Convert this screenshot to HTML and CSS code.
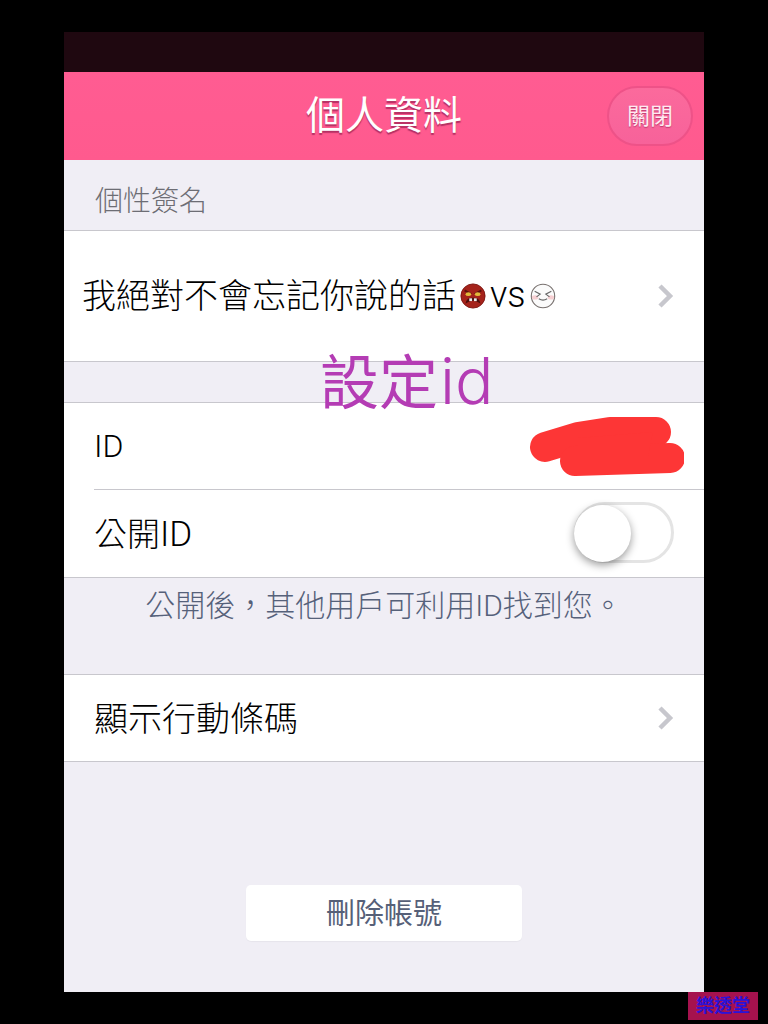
FILE: index.html
```html
<!DOCTYPE html>
<html lang="zh-Hant">
<head>
    <meta charset="utf-8">
    <title>個人資料</title>
    <link rel="stylesheet" href="styles.css">
</head>
<body>
    <div class="phone">
        <div class="status_bar"></div>
        <div class="nav_bar">
            <h1 class="nav_title">個人資料</h1>
            <div class="close_button"><span class="close_text">關閉</span></div>
        </div>

        <div class="section_label">個性簽名</div>
        <div class="group">
            <div class="row row_status">
                <span class="status_text">我絕對不會忘記你說的話</span>
                <svg class="emoji" viewBox="0 0 28 28">
                    <circle cx="14" cy="14" r="13" fill="#a5231b" stroke="#7c1712"/>
                    <path d="M5 8l7 4M23 8l-7 4" stroke="#5c0f0c" stroke-width="2"/>
                    <ellipse cx="9" cy="12" rx="3" ry="2" fill="#e2b93a"/>
                    <ellipse cx="19" cy="12" rx="3" ry="2" fill="#e2b93a"/>
                    <path d="M6 22c1-5 4-6 8-6s7 1 8 6l-4-2-4-1-4 1z" fill="#4a0d0a"/>
                    <rect x="10" y="16.500" width="3" height="3" fill="#eee"/>
                    <rect x="15" y="16.500" width="3" height="3" fill="#eee"/>
                </svg>
                <span class="status_text status_vs latin">vs</span>
                <svg class="emoji emoji_moon" viewBox="0 0 28 28">
                    <circle cx="14" cy="14" r="12.600" fill="#fbfbfb" stroke="#77706e" stroke-width="1.200"/>
                    <ellipse cx="5.500" cy="15.500" rx="3.500" ry="2.200" fill="#f6cfd2"/>
                    <ellipse cx="22.500" cy="15.500" rx="3.500" ry="2.200" fill="#f6cfd2"/>
                    <path d="M5 9l6 3-4 3M23 9l-6 3 4 3M9.500 17c3 2 6 2 9 0" fill="none" stroke="#666" stroke-width="1.200"/>
                </svg>
                <svg class="chevron" viewBox="0 0 18 26">
                    <path d="M3 3l10 10-10 10" fill="none" stroke="#c7c7cd" stroke-width="4.500"/>
                </svg>
            </div>
        </div>

        <div class="group group_id">
            <div class="row row_inset">
                <span class="row_label latin latin_id">ID</span>
                <svg class="scribble" viewBox="0 0 156 60">
                    <path d="M17 31L50 21L82 16L128 16" fill="none" stroke="#fd3636" stroke-width="30" stroke-linecap="round" stroke-linejoin="round"/>
                    <path d="M47 45L142 42" fill="none" stroke="#fd3636" stroke-width="30" stroke-linecap="round"/>
                    <path d="M50 22L125 16L120 40L50 40z" fill="#fd3636"/>
                </svg>
            </div>
            <div class="row row_public">
                <span class="row_label row_label_public">公開<span class="latin latin_id">ID</span></span>
                <div class="toggle"><div class="toggle_knob"></div></div>
            </div>
        </div>
        <div class="note">公開後，其他用戶可利用<span class="latin">ID</span>找到您。</div>

        <div class="group">
            <div class="row row_barcode">
                <span class="row_label row_label_barcode">顯示行動條碼</span>
                <svg class="chevron" viewBox="0 0 18 26">
                    <path d="M3 3l10 10-10 10" fill="none" stroke="#c7c7cd" stroke-width="4.500"/>
                </svg>
            </div>
        </div>

        <div class="delete_wrap">
            <div class="delete_button"><span class="delete_text">刪除帳號</span></div>
        </div>

        <div class="annotation">設定<span class="annotation_id">id</span></div>
    </div>
    <div class="watermark">樂透堂</div>
</body>
</html>
```

FILE: styles.css
```css
html {
    box-sizing: border-box;
    height: 100%;
}

body {
    margin: 0;
    height: 1024px;
    overflow: hidden;
    background-color: #000000;
    font-family: 'Liberation Sans', 'Noto Sans CJK TC', sans-serif;
    position: relative;
}

.latin {
    font-family: 'Roboto', sans-serif;
    font-weight: 300;
}

.latin_id {
    font-size: 35px;
}

.phone {
    position: relative;
    width: 640px;
    height: 960px;
    margin: 32px 0 0 64px;
    background-color: #f0eef5;
}

.status_bar {
    height: 40px;
    background-color: #1f0810;
}

.nav_bar {
    position: relative;
    height: 88px;
    display: flex;
    align-items: center;
    justify-content: center;
    background: linear-gradient(#ff5c92, #ff5a8e);
}

.nav_title {
    margin: 0 0 8px 0;
    font-size: 39px;
    font-weight: 400;
    color: #ffffff;
    text-shadow: 0 2px 1px rgba(130, 20, 70, 0.6);
}

.close_button {
    position: absolute;
    top: 14px;
    right: 11px;
    width: 86px;
    height: 60px;
    box-sizing: border-box;
    border: 2px solid #ee5288;
    border-radius: 30px;
    display: flex;
    align-items: center;
    justify-content: center;
    background: linear-gradient(#fb6a9c, #f7629a);
}

.close_text {
    margin-bottom: 4px;
    font-size: 23px;
    color: #ffeaf1;
    text-shadow: 0 1px 1px rgba(130, 20, 70, 0.5);
}

.section_label {
    height: 70px;
    box-sizing: border-box;
    padding: 23px 0 0 31px;
    font-size: 28px;
    font-weight: 300;
    line-height: 38px;
    color: #6d6d74;
}

.group {
    background-color: #ffffff;
    border-top: 1px solid #c8c7cd;
    border-bottom: 1px solid #c8c7cd;
}

.group_id {
    margin-top: 40px;
}

.row {
    display: flex;
    align-items: center;
    justify-content: space-between;
    height: 86px;
    box-sizing: border-box;
    padding-left: 30px;
}

.row_status {
    height: 130px;
    padding-left: 18px;
    justify-content: flex-start;
}

.status_text {
    margin-bottom: 5px;
    font-size: 34px;
    font-weight: 300;
    color: #000000;
}

.status_vs {
    margin: 0 4px 3px 4px;
    font-size: 36px;
}

.emoji {
    width: 26px;
    height: 26px;
    margin-left: 4px;
}

.emoji_moon {
    margin-left: 0;
}

.chevron {
    width: 18px;
    height: 26px;
    flex: none;
}

.row_status .chevron {
    margin-left: auto;
    margin-right: 29px;
}

.row_barcode {
    height: 86px;
    padding-right: 29px;
}

.row_inset {
    padding-left: 0;
    padding-right: 20px;
    margin-left: 30px;
    border-bottom: 1px solid #c8c7cd;
    height: 87px;
}

.row_public {
    padding-right: 30px;
    height: 87px;
}

.row_label {
    font-size: 32px;
    font-weight: 300;
    color: #000000;
}

.row_label_public {
    margin-bottom: 4px;
    font-size: 33px;
}

.row_label_barcode {
    margin-bottom: 4px;
    font-size: 34px;
}

.scribble {
    width: 156px;
    height: 60px;
}

.toggle {
    position: relative;
    width: 100px;
    height: 61px;
    margin-bottom: 2px;
    box-sizing: border-box;
    border: 3px solid #e4e4e4;
    border-radius: 31px;
    background-color: #ffffff;
}

.toggle_knob {
    position: absolute;
    top: 0;
    left: -3px;
    width: 57px;
    height: 57px;
    border-radius: 50%;
    background-color: #ffffff;
    box-shadow: 0 3px 9px rgba(0, 0, 0, 0.4);
}

.note {
    height: 96px;
    box-sizing: border-box;
    padding-top: 10px;
    text-align: center;
    font-size: 30px;
    font-weight: 300;
    line-height: 36px;
    color: #56617a;
}

.delete_wrap {
    display: flex;
    justify-content: center;
    padding-top: 123px;
}

.delete_button {
    width: 276px;
    height: 56px;
    border-radius: 5px;
    background-color: #ffffff;
    display: flex;
    align-items: center;
    justify-content: center;
    box-shadow: 0 1px 1px rgba(0, 0, 0, 0.04);
}

.delete_text {
    margin-bottom: 4px;
    font-size: 29px;
    color: #566078;
}

.annotation {
    position: absolute;
    top: 307px;
    left: 256px;
    font-family: 'Noto Sans CJK TC', sans-serif;
    font-size: 59px;
    line-height: 80px;
    font-weight: 400;
    color: #b43cb4;
}

.annotation_id {
    margin-left: 2px;
    font-family: 'Inter', sans-serif;
    font-size: 64px;
    font-weight: 300;
}

.watermark {
    position: absolute;
    top: 992px;
    left: 688px;
    width: 70px;
    height: 28px;
    background-color: #a5124e;
    color: #2a12d8;
    font-size: 18px;
    font-weight: 700;
    line-height: 28px;
    text-align: center;
}
```
